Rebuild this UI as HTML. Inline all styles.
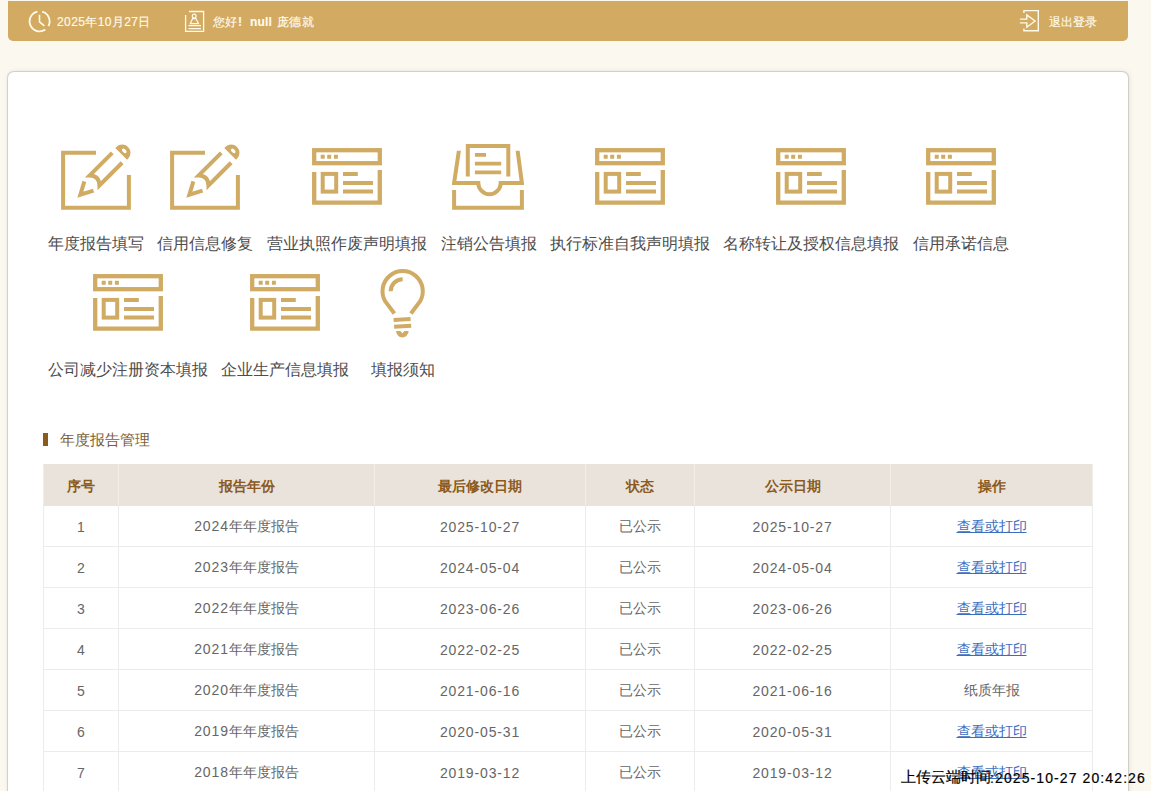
<!DOCTYPE html>
<html><head><meta charset="utf-8">
<style>
*{margin:0;padding:0;box-sizing:border-box}
html,body{width:1151px;height:791px;overflow:hidden;background:#fbf8ef;font-family:"Liberation Sans",sans-serif}
.abs{position:absolute}
#hdr{position:absolute;left:8px;top:1px;width:1120px;height:40px;background:#d3aa62;border-radius:0 0 5px 5px}
.ht{position:absolute;color:#fffbea;font-size:12px;line-height:16px;white-space:nowrap}
#card{position:absolute;left:8px;top:72px;width:1120px;height:760px;background:#fff;border-radius:6px;box-shadow:0 0 1px .5px rgba(0,0,0,.14),1px 0 6px rgba(0,0,0,.09)}
.lbl{position:absolute;font-size:16px;line-height:22px;color:#4d4d4d;white-space:nowrap}
.ico{position:absolute;width:72px;height:72px}
#sec{position:absolute;left:43px;top:433px;width:5px;height:13px;background:#8b5a1f}
#sect{position:absolute;left:60px;top:430px;font-size:15px;line-height:20px;color:#7c5e37;white-space:nowrap}
table{position:absolute;left:43px;top:464px;border-collapse:collapse;table-layout:fixed}
td,th{border:1px solid #ececec;height:41px;text-align:center;font-size:14px;color:#666;font-weight:normal;padding:2px 0 0}
.d{letter-spacing:.85px}
.ht{-webkit-text-stroke:.15px currentColor}
th{background:#e9e3dc;color:#8b5a1c;font-weight:bold;border-color:#e9e3dc #f2efea;padding-top:3px}
a{color:#3d6dbf;text-decoration:underline}
#up{position:absolute;left:901px;top:767px;font-size:15px;line-height:20px;color:#000;-webkit-text-stroke:.2px #000;white-space:nowrap}
</style></head><body>
<div id="hdr"></div>
<!-- clock -->
<svg class="abs" style="left:27px;top:10px" width="25" height="23" viewBox="0 0 25 23">
<path d="M10.35 1.66 A10 10 0 1 0 18.34 19.59" fill="none" stroke="#fffbea" stroke-width="1.8"/>
<path d="M15.19 1.74 A10 10 0 0 1 21.43 16.09" fill="none" stroke="#fffbea" stroke-width="1.8"/>
<path d="M12.5 4.8 V11.9 L17.3 15.9" fill="none" stroke="#fffbea" stroke-width="1.6"/>
</svg>
<div class="ht" style="left:57px;top:14px;letter-spacing:.4px">2025年10月27日</div>
<!-- badge -->
<svg class="abs" style="left:184px;top:10px" width="22" height="24" viewBox="0 0 22 24">
<path d="M5 1.5 H19.6 V21.3 H1.6 V5" fill="none" stroke="#fffbea" stroke-width="1.3"/>
<circle cx="10.2" cy="6.1" r="1.9" fill="none" stroke="#fffbea" stroke-width="1.2"/>
<path d="M8.6 8.6 L6.3 13.7 H14.5 L11.9 8.6 Z" fill="none" stroke="#fffbea" stroke-width="1.2"/>
<path d="M4.5 15.7 H17 M4.5 18.6 H17" stroke="#fffbea" stroke-width="1.3"/>
</svg>
<div class="ht" style="left:213px;top:14px">您好</div><div class="ht" style="left:238px;top:14px;font-weight:bold">!</div><div class="ht" style="left:250px;top:14px;font-weight:bold;letter-spacing:.2px">null</div><div class="ht" style="left:277px;top:14px;letter-spacing:.3px">庞德就</div>
<!-- logout -->
<svg class="abs" style="left:1018px;top:8px" width="24" height="26" viewBox="0 0 24 26">
<path d="M5.9 5 V2.6 H20.3 V22.8 H5.9 V20.4" fill="none" stroke="#fffbea" stroke-width="1.4"/>
<path d="M1.9 11.1 H8.8 V6.9 L17.1 13 L8.8 19.2 V14.9 H1.9" fill="none" stroke="#fffbea" stroke-width="1.4"/>
</svg>
<div class="ht" style="left:1049px;top:14px">退出登录</div>

<div id="card"></div>
<svg class="ico" style="left:60px;top:141px" viewBox="0 0 72 72"><path d="M36 11.7 H3.1 V66.8 H68.9 V34" fill="none" stroke="#d0ab64" stroke-width="4" stroke-linejoin="miter"/><g transform="translate(17.3 56.7) rotate(-45)"><path d="M16.5 -6.5 L4.3 0 L16.5 6.5" fill="none" stroke="#d0ab64" stroke-width="4" stroke-linejoin="miter"/><path d="M56.4 -7 H24.3 Q31 0 24.3 7 H56.4" fill="none" stroke="#d0ab64" stroke-width="4"/><path d="M62 -8.3 H63.5 A8.3 8.3 0 0 1 63.5 8.3 H62 Z M66.3 -2.6 A1.6 2.7 0 0 0 66.3 2.8 A1.6 2.7 0 0 0 66.3 -2.6 Z" fill="#d0ab64" fill-rule="evenodd"/></g></svg>
<div class="lbl" style="left:48px;top:233px">年度报告填写</div>
<svg class="ico" style="left:169px;top:141px" viewBox="0 0 72 72"><path d="M36 11.7 H3.1 V66.8 H68.9 V34" fill="none" stroke="#d0ab64" stroke-width="4" stroke-linejoin="miter"/><g transform="translate(17.3 56.7) rotate(-45)"><path d="M16.5 -6.5 L4.3 0 L16.5 6.5" fill="none" stroke="#d0ab64" stroke-width="4" stroke-linejoin="miter"/><path d="M56.4 -7 H24.3 Q31 0 24.3 7 H56.4" fill="none" stroke="#d0ab64" stroke-width="4"/><path d="M62 -8.3 H63.5 A8.3 8.3 0 0 1 63.5 8.3 H62 Z M66.3 -2.6 A1.6 2.7 0 0 0 66.3 2.8 A1.6 2.7 0 0 0 66.3 -2.6 Z" fill="#d0ab64" fill-rule="evenodd"/></g></svg>
<div class="lbl" style="left:157px;top:233px">信用信息修复</div>
<svg class="ico" style="left:311px;top:141px" viewBox="0 0 72 72"><rect x="3.2" y="9.2" width="65.6" height="13" fill="none" stroke="#d0ab64" stroke-width="4.3"/><path d="M9.7 13.7h4v4h-4z M16.2 13.7h4v4h-4z M22.9 13.7h4v4h-4z" fill="#d0ab64"/><path d="M3.2 31 V61.7 H68.8 V28.9" fill="none" stroke="#d0ab64" stroke-width="4.3"/><rect x="11.7" y="32.9" width="13.5" height="17.7" fill="none" stroke="#d0ab64" stroke-width="4"/><path d="M32 33H46.8 M32 42H62 M32 50.6H62" stroke="#d0ab64" stroke-width="4"/></svg>
<div class="lbl" style="left:267px;top:233px">营业执照作废声明填报</div>
<svg class="ico" style="left:452px;top:141px" viewBox="0 0 72 72"><path d="M15.8 35.5 V5.1 H56.3 V35.5" fill="none" stroke="#d0ab64" stroke-width="4"/><path d="M22.9 13.85H34 M22.9 22.7H49.2 M22.9 31.35H49.2" stroke="#d0ab64" stroke-width="3.8"/><clipPath id="tc452"><rect x="-5" y="9.7" width="90" height="60"/></clipPath><path clip-path="url(#tc452)" d="M7.3 7 L2.1 42 H26.3 A11.2 11.2 0 0 0 48.7 42 H69.9 L65.25 7" fill="none" stroke="#d0ab64" stroke-width="4"/><path d="M2.1 49.1 V66.8 H69.9 V49.1" fill="none" stroke="#d0ab64" stroke-width="4"/></svg>
<div class="lbl" style="left:441px;top:233px">注销公告填报</div>
<svg class="ico" style="left:594px;top:141px" viewBox="0 0 72 72"><rect x="3.2" y="9.2" width="65.6" height="13" fill="none" stroke="#d0ab64" stroke-width="4.3"/><path d="M9.7 13.7h4v4h-4z M16.2 13.7h4v4h-4z M22.9 13.7h4v4h-4z" fill="#d0ab64"/><path d="M3.2 31 V61.7 H68.8 V28.9" fill="none" stroke="#d0ab64" stroke-width="4.3"/><rect x="11.7" y="32.9" width="13.5" height="17.7" fill="none" stroke="#d0ab64" stroke-width="4"/><path d="M32 33H46.8 M32 42H62 M32 50.6H62" stroke="#d0ab64" stroke-width="4"/></svg>
<div class="lbl" style="left:550px;top:233px">执行标准自我声明填报</div>
<svg class="ico" style="left:775px;top:141px" viewBox="0 0 72 72"><rect x="3.2" y="9.2" width="65.6" height="13" fill="none" stroke="#d0ab64" stroke-width="4.3"/><path d="M9.7 13.7h4v4h-4z M16.2 13.7h4v4h-4z M22.9 13.7h4v4h-4z" fill="#d0ab64"/><path d="M3.2 31 V61.7 H68.8 V28.9" fill="none" stroke="#d0ab64" stroke-width="4.3"/><rect x="11.7" y="32.9" width="13.5" height="17.7" fill="none" stroke="#d0ab64" stroke-width="4"/><path d="M32 33H46.8 M32 42H62 M32 50.6H62" stroke="#d0ab64" stroke-width="4"/></svg>
<div class="lbl" style="left:723px;top:233px">名称转让及授权信息填报</div>
<svg class="ico" style="left:925px;top:141px" viewBox="0 0 72 72"><rect x="3.2" y="9.2" width="65.6" height="13" fill="none" stroke="#d0ab64" stroke-width="4.3"/><path d="M9.7 13.7h4v4h-4z M16.2 13.7h4v4h-4z M22.9 13.7h4v4h-4z" fill="#d0ab64"/><path d="M3.2 31 V61.7 H68.8 V28.9" fill="none" stroke="#d0ab64" stroke-width="4.3"/><rect x="11.7" y="32.9" width="13.5" height="17.7" fill="none" stroke="#d0ab64" stroke-width="4"/><path d="M32 33H46.8 M32 42H62 M32 50.6H62" stroke="#d0ab64" stroke-width="4"/></svg>
<div class="lbl" style="left:913px;top:233px">信用承诺信息</div>
<svg class="ico" style="left:92px;top:267px" viewBox="0 0 72 72"><rect x="3.2" y="9.2" width="65.6" height="13" fill="none" stroke="#d0ab64" stroke-width="4.3"/><path d="M9.7 13.7h4v4h-4z M16.2 13.7h4v4h-4z M22.9 13.7h4v4h-4z" fill="#d0ab64"/><path d="M3.2 31 V61.7 H68.8 V28.9" fill="none" stroke="#d0ab64" stroke-width="4.3"/><rect x="11.7" y="32.9" width="13.5" height="17.7" fill="none" stroke="#d0ab64" stroke-width="4"/><path d="M32 33H46.8 M32 42H62 M32 50.6H62" stroke="#d0ab64" stroke-width="4"/></svg>
<div class="lbl" style="left:48px;top:359px">公司减少注册资本填报</div>
<svg class="ico" style="left:249px;top:267px" viewBox="0 0 72 72"><rect x="3.2" y="9.2" width="65.6" height="13" fill="none" stroke="#d0ab64" stroke-width="4.3"/><path d="M9.7 13.7h4v4h-4z M16.2 13.7h4v4h-4z M22.9 13.7h4v4h-4z" fill="#d0ab64"/><path d="M3.2 31 V61.7 H68.8 V28.9" fill="none" stroke="#d0ab64" stroke-width="4.3"/><rect x="11.7" y="32.9" width="13.5" height="17.7" fill="none" stroke="#d0ab64" stroke-width="4"/><path d="M32 33H46.8 M32 42H62 M32 50.6H62" stroke="#d0ab64" stroke-width="4"/></svg>
<div class="lbl" style="left:221px;top:359px">企业生产信息填报</div>
<svg class="ico" style="left:367px;top:267px" viewBox="0 0 72 72"><path d="M27.4 46.5 L18.3 34.5 A20.15 20.15 0 1 1 53 34.5 L43.9 46.5" fill="none" stroke="#d0ab64" stroke-width="4"/><path d="M23.65 24.25 A12 12 0 0 1 35.65 12.25" fill="none" stroke="#d0ab64" stroke-width="4"/><path d="M26.6 53 L43.6 52 M27.1 59.8 L44.2 58.7" stroke="#d0ab64" stroke-width="4"/><path d="M29.05 64.1 A6.3 6.3 0 0 0 41.65 64.1 L37.5 64.1 L35.35 66.3 L33.2 64.1 Z" fill="#d0ab64"/></svg>
<div class="lbl" style="left:371px;top:359px">填报须知</div>
<div id="sec"></div>
<div id="sect">年度报告管理</div>
<table><colgroup><col style="width:75px"><col style="width:256px"><col style="width:211px"><col style="width:109px"><col style="width:196px"><col style="width:202px"></colgroup><tr><th>序号</th><th>报告年份</th><th>最后修改日期</th><th>状态</th><th>公示日期</th><th>操作</th></tr><tr><td>1</td><td><span class="d">2024</span>年年度报告</td><td><span class="d">2025-10-27</span></td><td>已公示</td><td><span class="d">2025-10-27</span></td><td><a>查看或打印</a></td></tr><tr><td>2</td><td><span class="d">2023</span>年年度报告</td><td><span class="d">2024-05-04</span></td><td>已公示</td><td><span class="d">2024-05-04</span></td><td><a>查看或打印</a></td></tr><tr><td>3</td><td><span class="d">2022</span>年年度报告</td><td><span class="d">2023-06-26</span></td><td>已公示</td><td><span class="d">2023-06-26</span></td><td><a>查看或打印</a></td></tr><tr><td>4</td><td><span class="d">2021</span>年年度报告</td><td><span class="d">2022-02-25</span></td><td>已公示</td><td><span class="d">2022-02-25</span></td><td><a>查看或打印</a></td></tr><tr><td>5</td><td><span class="d">2020</span>年年度报告</td><td><span class="d">2021-06-16</span></td><td>已公示</td><td><span class="d">2021-06-16</span></td><td>纸质年报</td></tr><tr><td>6</td><td><span class="d">2019</span>年年度报告</td><td><span class="d">2020-05-31</span></td><td>已公示</td><td><span class="d">2020-05-31</span></td><td><a>查看或打印</a></td></tr><tr><td>7</td><td><span class="d">2018</span>年年度报告</td><td><span class="d">2019-03-12</span></td><td>已公示</td><td><span class="d">2019-03-12</span></td><td><a>查看或打印</a></td></tr></table>
<div id="up">上传云端时间<span style="font-size:14px;letter-spacing:1.1px;margin-left:-1px;position:relative;top:1px">:2025-10-27 20:42:26</span></div>
</body></html>
